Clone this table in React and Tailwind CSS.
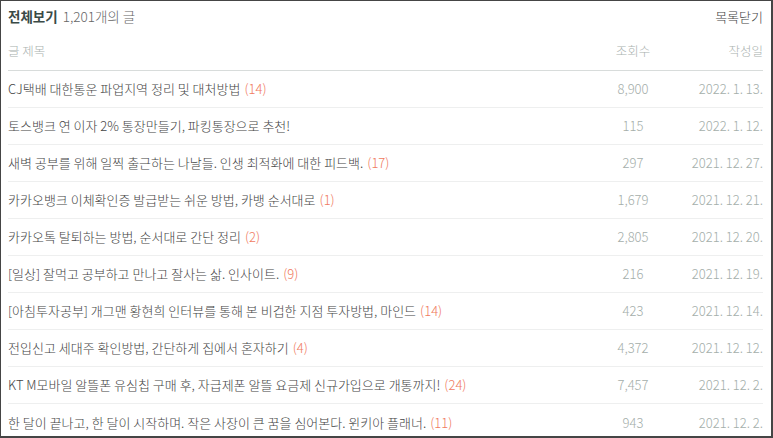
const rows = [
  ["CJ택배 대한통운 파업지역 정리 및 대처방법", 14, "8,900", "2022. 1. 13."],
  ["토스뱅크 연 이자 2% 통장만들기, 파킹통장으로 추천!", null, "115", "2022. 1. 12."],
  ["새벽 공부를 위해 일찍 출근하는 나날들. 인생 최적화에 대한 피드백.", 17, "297", "2021. 12. 27."],
  ["카카오뱅크 이체확인증 발급받는 쉬운 방법, 카뱅 순서대로", 1, "1,679", "2021. 12. 21."],
  ["카카오톡 탈퇴하는 방법, 순서대로 간단 정리", 2, "2,805", "2021. 12. 20."],
  ["[일상] 잘먹고 공부하고 만나고 잘사는 삶. 인사이트.", 9, "216", "2021. 12. 19."],
  ["[아침투자공부] 개그맨 황현희 인터뷰를 통해 본 비겁한 지점 투자방법, 마인드", 14, "423", "2021. 12. 14."],
  ["전입신고 세대주 확인방법, 간단하게 집에서 혼자하기", 4, "4,372", "2021. 12. 12."],
  ["KT M모바일 알뜰폰 유심칩 구매 후, 자급제폰 알뜰 요금제 신규가입으로 개통까지!", 24, "7,457", "2021. 12. 2."],
  ["한 달이 끝나고, 한 달이 시작하며. 작은 사장이 큰 꿈을 심어본다. 윈키아 플래너.", 11, "943", "2021. 12. 2."],
];

export default function App() {
  return (
    <div
      className="w-[773px] h-[438px] overflow-hidden bg-white border-t border-l border-r-2 border-b-2 border-[#454545]"
      style={{ fontFamily: '"Noto Sans CJK KR", "Noto Sans", sans-serif' }}
    >
      <div className="pl-[7px] pr-[8px]">
        <div className="h-[31px] flex items-center justify-between">
          <div className="text-[13.5px] leading-none">
            <span className="font-bold text-[#3a4a46]">전체보기</span>
            <span className="font-light text-[#666] ml-[5px]">1,201개의 글</span>
          </div>
          <div className="font-light text-[13px] text-[#444] leading-none">목록닫기</div>
        </div>
        <div className="h-[39px] flex items-center border-b border-[#d8dcdb] font-light text-[12.5px] text-[#aab2af]">
          <div className="flex-1">글 제목</div>
          <div className="w-[60px] text-center">조회수</div>
          <div className="w-[100px] text-right">작성일</div>
        </div>
        {rows.map((r, i) => (
          <div
            key={i}
            className={`h-[37px] flex items-center font-light text-[13px] ${i < rows.length - 1 ? "border-b border-[#eeefef]" : ""}`}
          >
            <div className="flex-1 text-[#444] whitespace-nowrap">
              {r[0]}
              {r[1] !== null && <span className="text-[#f07a60] ml-[4px]">({r[1]})</span>}
            </div>
            <div className="w-[60px] text-center text-[#a4aeaa]">{r[2]}</div>
            <div className="w-[100px] text-right text-[#a4aeaa]">{r[3]}</div>
          </div>
        ))}
      </div>
    </div>
  );
}
